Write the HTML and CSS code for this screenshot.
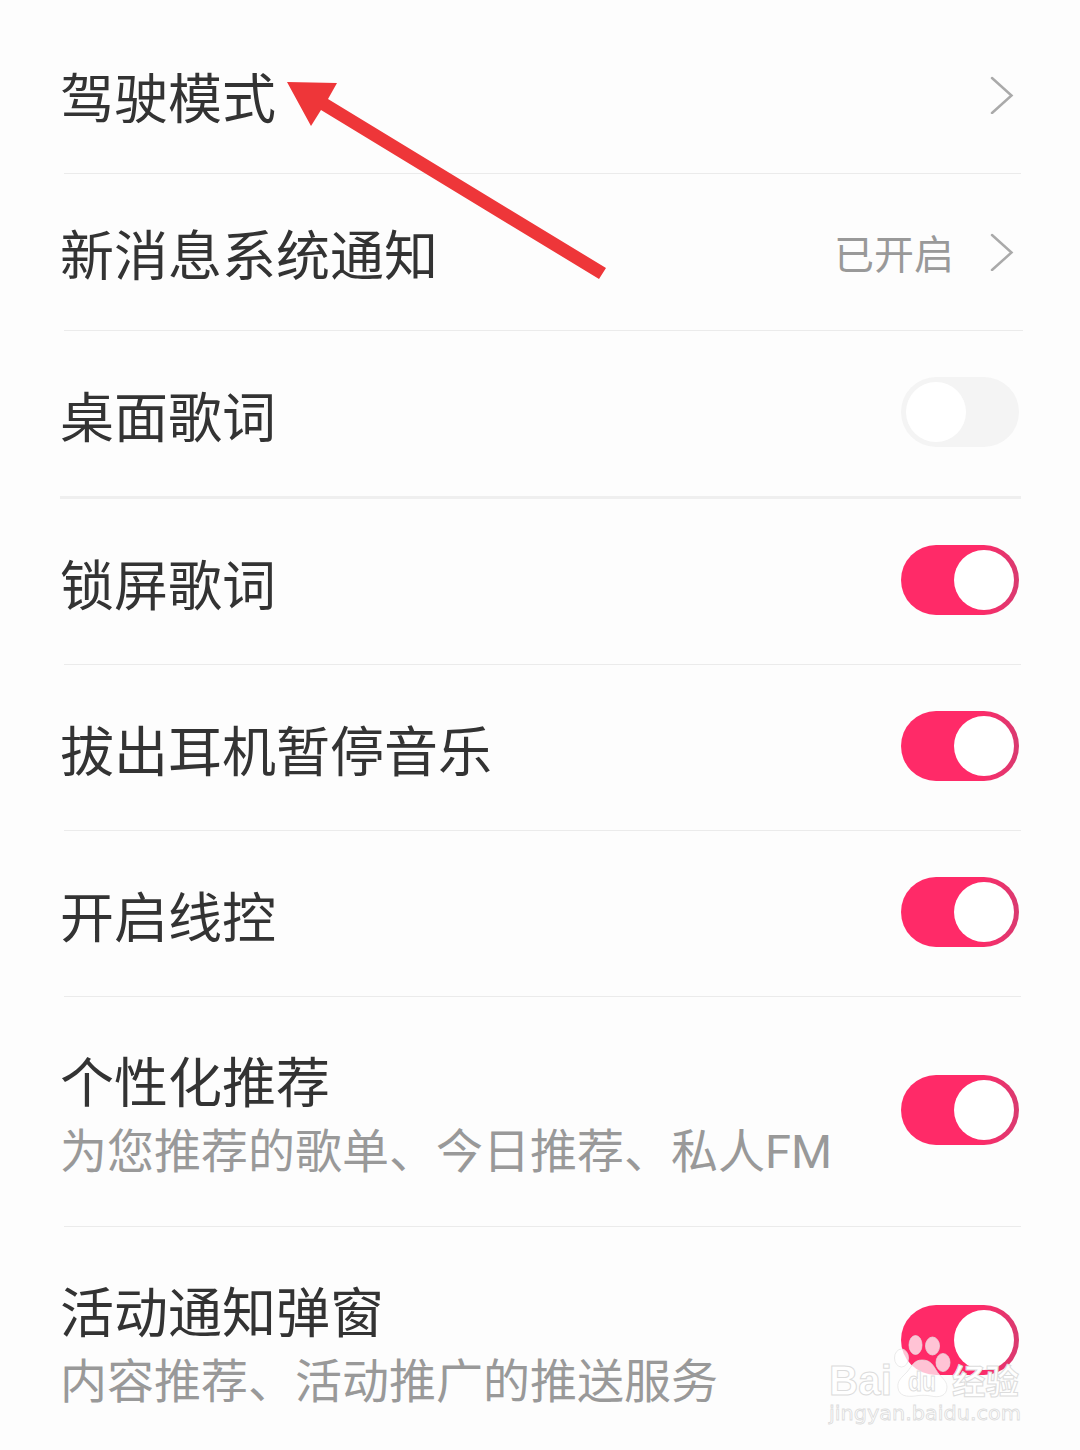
FILE: index.html
```html
<!DOCTYPE html>
<html lang="zh-CN">
<head>
<meta charset="utf-8">
<title>设置</title>
<link rel="stylesheet" href="styles.css">
</head>
<body>
<main class="settings">
  <div class="row row-link">
    <div class="title">驾驶模式</div>
    <svg class="chevron" viewBox="0 0 24 38"><path d="M2 2 21.500 19.500 2 37"/></svg>
  </div>
  <div class="row row-link row-wide">
    <div class="title">新消息系统通知</div>
    <div class="value">已开启</div>
    <svg class="chevron" viewBox="0 0 24 38"><path d="M2 2 21.500 19.500 2 37"/></svg>
  </div>
  <div class="row row-section">
    <div class="title">桌面歌词</div>
    <div class="switch"><div class="knob"></div></div>
  </div>
  <div class="row">
    <div class="title">锁屏歌词</div>
    <div class="switch on"><div class="knob"></div></div>
  </div>
  <div class="row">
    <div class="title">拔出耳机暂停音乐</div>
    <div class="switch on"><div class="knob"></div></div>
  </div>
  <div class="row">
    <div class="title">开启线控</div>
    <div class="switch on"><div class="knob"></div></div>
  </div>
  <div class="row row-tall">
    <div class="copy">
      <div class="title">个性化推荐</div>
      <div class="desc">为您推荐的歌单、今日推荐、私人FM</div>
    </div>
    <div class="switch on"><div class="knob"></div></div>
  </div>
  <div class="row row-last">
    <div class="copy">
      <div class="title">活动通知弹窗</div>
      <div class="desc">内容推荐、活动推广的推送服务</div>
    </div>
    <div class="switch on"><div class="knob"></div></div>
  </div>
</main>
<svg class="arrow" viewBox="0 0 320 198"><path d="M0 0 50 1 41 17 319 186 312 197 34 28 24 44Z"/></svg>
<svg class="watermark" viewBox="0 0 220 110">
  <g class="mark">
    <ellipse cx="95.500" cy="25" rx="6.500" ry="9.500"/>
    <ellipse cx="112.500" cy="26" rx="7" ry="9"/>
    <ellipse cx="81.500" cy="38" rx="7" ry="9"/>
    <ellipse cx="123" cy="42.500" rx="7" ry="9"/>
    <path d="M102 40C94 40 92 46 87 52C81 58 77 61 78 68C79 76 87 77 95 76C100 75 106 75 111 76C119 78 127 76 127 67C127 60 120 57 116 50C112 43 109 40 102 40Z"/>
  </g>
  <text class="brand" x="9" y="75" textLength="63" lengthAdjust="spacingAndGlyphs">Bai</text>
  <text class="du" x="88" y="71" textLength="28" lengthAdjust="spacingAndGlyphs">du</text>
  <text class="cn" x="132" y="74" textLength="67" lengthAdjust="spacingAndGlyphs">经验</text>
  <text class="site" x="9" y="100" textLength="192" lengthAdjust="spacingAndGlyphs">jingyan.baidu.com</text>
</svg>
</body>
</html>
```
FILE: styles.css
```css
* { box-sizing: border-box; }
body {
  margin: 0;
  position: relative;
  width: 1080px;
  height: 1450px;
  overflow: hidden;
  background: #fdfdfd;
  color: #333;
  font-family: "Noto Sans CJK SC", sans-serif;
}
.settings { padding: 17px 57px 0 64px; }
.row {
  display: flex;
  align-items: center;
  height: 166px;
  margin-right: 2px;
  padding-bottom: 3px;
  border-bottom: 1px solid #ebebeb;
}
.row-link { height: 157px; padding-bottom: 0; }
.row-wide { margin-right: 0; }
.row-wide .chevron { margin-right: 9px; }
.row-section { height: 168px; margin-left: -4px; padding-left: 4px; border-bottom: 3px solid #efefef; }
.row-tall { height: 230px; }
.row-last { height: 223px; padding: 3px 0 0; border: 0; }
.title {
  flex: 1;
  margin-left: -4px;
  padding-top: 5px;
  font-size: 54px;
  line-height: 68px;
  white-space: nowrap;
}
.row-link .title { padding-top: 2px; }
.copy { flex: 1; padding-top: 7px; }
.desc {
  margin-left: -4px;
  padding-top: 4px;
  color: #999;
  font-family: Roboto, "Noto Sans CJK SC", sans-serif;
  font-size: 47px;
  line-height: 68px;
  white-space: nowrap;
}
.value { margin-right: 36px; color: #999; font-size: 40px; line-height: 50px; }
.chevron {
  width: 24px;
  height: 38px;
  margin-right: 7px;
  fill: none;
  stroke: #aaa;
  stroke-width: 2.5;
  stroke-linecap: round;
}
.switch {
  width: 118px;
  height: 70px;
  margin-right: 2px;
  padding: 5px;
  border-radius: 35px;
  background: #f4f4f4;
}
.knob { width: 60px; height: 60px; border-radius: 50%; background: #fff; }
.switch.on {
  display: flex;
  justify-content: flex-end;
  background: linear-gradient(90deg, #ff2a68 65%, #d93a70);
}
.arrow { position: absolute; left: 287px; top: 82px; width: 320px; height: 198px; fill: #ee3639; }
.watermark { position: absolute; left: 820px; top: 1320px; width: 220px; height: 110px; }
.mark { fill: rgba(255, 255, 255, .72); stroke: #e2e2e2; stroke-width: .7; }
.watermark text {
  fill: #fff;
  stroke: #dcdcdc;
  stroke-width: 1;
  font-family: "Liberation Sans", "Noto Sans CJK SC", sans-serif;
  font-weight: 700;
}
.brand { font-size: 42px; }
.du { font-size: 27px; }
.cn { font-size: 34px; }
.watermark .site { font-size: 20px; font-family: "DejaVu Sans", sans-serif; font-weight: 400; stroke-width: .8; }
```
